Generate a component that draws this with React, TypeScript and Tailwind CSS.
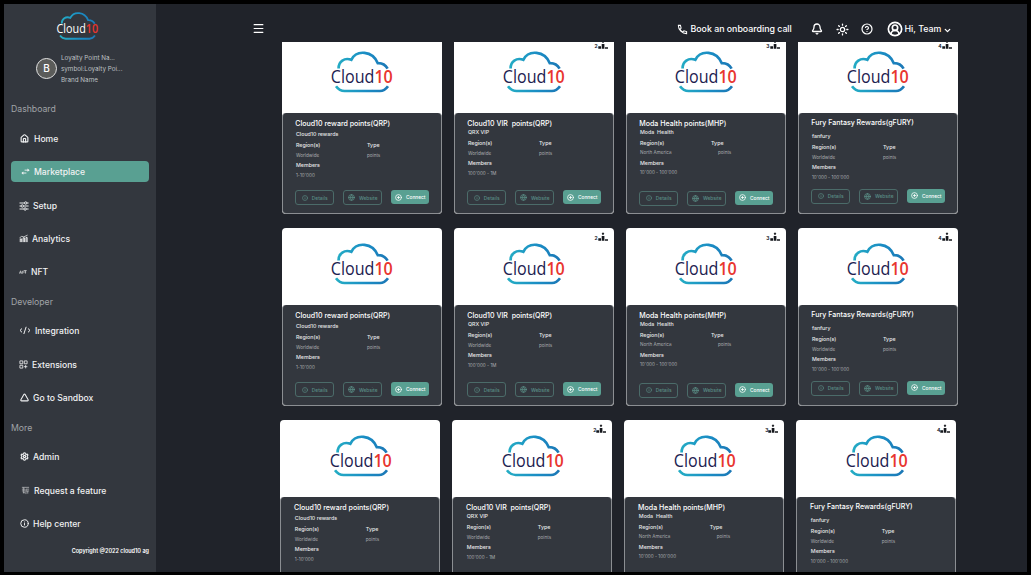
import React from "react";
import { Menu, Info, Globe, CirclePlus, Bell, Sun, CircleHelp, CircleUserRound, ChevronDown, House, Triangle, Settings } from "lucide-react";

function Logo({ dark, cls }: { dark?: boolean; cls: string }) {
  const id = dark ? "cloud-dark" : "cloud-light";
  return (
    <svg viewBox="0 0 64 42" className={`overflow-visible ${cls}`}>
      <defs>
        <linearGradient id={id} gradientUnits="userSpaceOnUse" x1="5" x2="58" y1="0" y2="0">
          <stop offset="0" stopColor="#25aec4" />
          <stop offset="0.6" stopColor="#1a8cc4" />
          <stop offset="1" stopColor="#1c78b6" />
        </linearGradient>
      </defs>
      <g fill="none" stroke={`url(#${id})`} strokeWidth="2.7">
        <path d="M8.6 17.5C8.4 10.5 14.5 6.2 21.3 8.8C26.5-1.5 42.5-.5 47.8 12.2C52 12 55.5 14 57.6 17.6" />
        <path d="M6 35.2Q9.5 40 14.5 40H50Q54.5 40 58 35.2" />
      </g>
      <text x="0.8" y="32" textLength="62" lengthAdjust="spacingAndGlyphs" fontFamily="Open Sans, sans-serif" fontSize="18" fill={dark ? "#ffffff" : "#1c2150"}>
        Cloud<tspan fontWeight="600" fill="#e8352e">10</tspan>
      </text>
    </svg>
  );
}

const ic = "h-[9px] w-[9px] shrink-0";

function Swap() {
  return (
    <svg viewBox="0 0 10 10" className={ic} fill="none" stroke="currentColor" strokeWidth="1">
      <path d="M4 3.5H8M1.6 6.7H6" />
      <path d="M7.2 1.7L9.6 3.5L7.2 5.2ZM2.6 5L.4 6.7L2.6 8.5Z" fill="currentColor" stroke="none" />
    </svg>
  );
}
function Sliders() {
  return (
    <svg viewBox="0 0 10 10" className="h-[10px] w-[10px] shrink-0" fill="none" stroke="currentColor" strokeWidth=".95">
      <path d="M.5 2H5.4M8 2H9.6M.5 5H2M4.6 5H9.6M.5 8H4.8M7.4 8H9.6" />
      <circle cx="6.7" cy="2" r="1.2" />
      <circle cx="3.3" cy="5" r="1.2" />
      <circle cx="6.1" cy="8" r="1.2" />
    </svg>
  );
}
function Chart() {
  return (
    <svg viewBox="0 0 10 10" className={ic} fill="none" stroke="currentColor" strokeWidth="1.1">
      <path d="M1.4 9V5.5H3V9M4.6 9V4.2H6V9M7.8 9V3.8H9V9" />
      <path d="M.5 4.4L3 2.6L5.3 3.2L9.6 1.2" strokeWidth=".8" />
    </svg>
  );
}
function Nft() {
  return (
    <svg viewBox="0 0 10 10" className="h-[8px] w-[8px] shrink-0" fill="none" stroke="currentColor" strokeWidth="1" opacity=".8">
      <path d="M.5 7L2 3.5L3.2 7M1 6H3M4.6 7.2V3.5M4.6 5H6.5M5.8 3.2H9.6M8 3.2V7M6.8 5H9" />
    </svg>
  );
}
function Code() {
  return (
    <svg viewBox="0 0 12 9" className="h-[9px] w-[12px] shrink-0" fill="none" stroke="currentColor" strokeWidth="1">
      <path d="M3 2.5L1 4.4L3 6.3M9 2.5L11 4.4L9 6.3M7.2 .8L4.8 8" />
    </svg>
  );
}
function Blocks() {
  return (
    <svg viewBox="0 0 10 10" className={ic} fill="none" stroke="currentColor" strokeWidth=".9">
      <path d="M1 1H4.2V4.2H1ZM1 5.9H4.2V9H1ZM5.9 1H9V4.2H5.9ZM7.4 5.6V9.3M5.6 7.4H9.3" />
    </svg>
  );
}
function Feature() {
  return (
    <svg viewBox="0 0 10 10" className={ic} fill="none" stroke="currentColor" strokeWidth=".8" opacity=".75">
      <path d="M1 1.5H9M1 3.5H4.5M1 5.5H4.5M2 7.5H4.5M5.5 9V3.5H9M5.5 5.5H9M7.5 5.5V8.5M3 1.5V8" />
    </svg>
  );
}

function Item({ icon, label, cls }: { icon: React.ReactNode; label: string; cls: string }) {
  return (
    <div className={`flex h-[21px] shrink-0 items-center rounded-[4px] text-[8.6px] font-medium text-[#f1f2f3] ${cls}`}>
      {icon}
      <span className="whitespace-nowrap pt-px">{label}</span>
    </div>
  );
}
function Heading({ label, cls }: { label: string; cls: string }) {
  return <div className={`flex h-[15px] shrink-0 items-center pt-[2px] text-[8.7px] text-[#a0a3a7] ${cls}`}>{label}</div>;
}

function Sidebar() {
  return (
    <aside className="flex h-[568px] w-[152px] shrink-0 flex-col bg-[#33373e] pl-[7px]">
      <Logo dark cls="ml-[44.5px] mt-[7px] h-[30px] w-[43px] shrink-0" />
      <div className="mt-[10px] flex h-[34px] shrink-0 items-center pl-[25px]">
        <div className="flex h-[21px] w-[21px] shrink-0 items-center justify-center rounded-full border border-[#e4e4e4] bg-[#5b5c5a] text-[10px] font-medium text-white">B</div>
        <div className="ml-[4px] whitespace-nowrap pt-[2px] text-[6.3px] leading-[11px] text-[#bfc1c4]">
          <div>Loyalty Point Na...</div>
          <div>symbol:Loyalty Poi...</div>
          <div>Brand Name</div>
        </div>
      </div>
      <Heading label="Dashboard" cls="mt-[16px]" />
      <Item icon={<House className={ic} strokeWidth={3} />} label="Home" cls="mt-[12px] gap-[5px] pl-[9px]" />
      <Item icon={<Swap />} label="Marketplace" cls="mr-[7px] mt-[12px] gap-[4px] bg-[#59a092] pl-[10px]" />
      <Item icon={<Sliders />} label="Setup" cls="mt-[13px] gap-[4px] pl-[8px]" />
      <Item icon={<Chart />} label="Analytics" cls="mt-[12px] gap-[4px] pl-[8px]" />
      <Item icon={<Nft />} label="NFT" cls="mt-[12px] gap-[4px] pl-[8px]" />
      <Heading label="Developer" cls="mt-[12px]" />
      <Item icon={<Code />} label="Integration" cls="mt-[11px] gap-[4px] pl-[8px]" />
      <Item icon={<Blocks />} label="Extensions" cls="mt-[13px] gap-[4px] pl-[8px]" />
      <Item icon={<Triangle className={ic} strokeWidth={2.8} />} label="Go to Sandbox" cls="mt-[12px] gap-[4px] pl-[9px]" />
      <Heading label="More" cls="mt-[12px]" />
      <Item icon={<Settings className={ic} strokeWidth={3} />} label="Admin" cls="mt-[11px] gap-[4px] pl-[9px]" />
      <Item icon={<Feature />} label="Request a feature" cls="mt-[13px] gap-[4px] pl-[10px]" />
      <Item icon={<Info className={ic} strokeWidth={2.6} />} label="Help center" cls="mt-[12px] gap-[4px] pl-[9px]" />
      <div className="mt-[12px] pr-[7px] text-right text-[5.5px] font-semibold leading-[10px] text-white">Copyright @2022 cloud10 ag</div>
    </aside>
  );
}

function Header() {
  return (
    <header className="flex h-[38px] shrink-0 items-center pl-[96px] pt-[12px] text-[8.8px] font-medium text-white">
      <Menu className="-mt-px h-[13px] w-[13px]" strokeWidth={2.3} />
      <svg viewBox="0 0 24 24" className="ml-[412px] h-[11px] w-[11px]" fill="none" stroke="currentColor" strokeWidth="2.2">
        <path d="M3 3H7.5L9 9L6.5 11.5C8 14.5 9.5 16 12.5 17.5L15 15L21 16.5V21C11 21 3 13 3 3Z" />
      </svg>
      <span className="ml-[2.5px] w-[104px] whitespace-nowrap">Book an onboarding call</span>
      <Bell className="ml-[16px] h-[12px] w-[12px]" strokeWidth={2.6} />
      <Sun className="ml-[13px] h-[13px] w-[13px]" strokeWidth={2.4} />
      <CircleHelp className="ml-[12px] h-[12px] w-[12px]" strokeWidth={2.4} />
      <CircleUserRound className="ml-[14px] h-[16px] w-[16px]" strokeWidth={2.5} />
      <span className="ml-[2px] w-[38px] whitespace-nowrap">Hi, Team</span>
      <ChevronDown className="mt-[2px] h-[9px] w-[9px]" strokeWidth={3.4} />
    </header>
  );
}

type CardData = {
  title: string; sub: string; region: string; range: string; rank?: string;
  gap: string; typeCls: string; btn: string; lift: string;
};

const cards: CardData[] = [
  { title: "Cloud10 reward points(QRP)", sub: "Cloud10 rewards", region: "Worldwide", range: "1-10'000", gap: "mt-0", typeCls: "", btn: "mb-[8.4px]", lift: "mt-px" },
  { title: "Cloud10 VIR  points(QRP)", sub: "QRX VIP", region: "Worldwide", range: "100'000 - 1M", rank: "2", gap: "-mt-[1.8px]", typeCls: "", btn: "mb-[8.4px]", lift: "mt-px" },
  { title: "Moda Health points(MHP)", sub: "Moda  Health", region: "North America", range: "10'000 - 100'000", rank: "3", gap: "-mt-[2.5px]", typeCls: "pl-[7px]", btn: "mb-[7.6px]", lift: "mt-px" },
  { title: "Fury Fantasy Rewards(gFURY)", sub: "fanfury", region: "Worldwide", range: "10'000 - 100'000", rank: "4", gap: "mt-[2.6px]", typeCls: "", btn: "mb-[9px]", lift: "mt-[0.4px]" },
];

function Rank({ n }: { n: string }) {
  return (
    <div className="absolute right-[6px] top-[4px] flex items-end text-[#15171c]">
      <span className="text-[5px] font-bold leading-[5px]">{n}</span>
      <svg viewBox="0 0 10 9" className="h-[9px] w-[10px]" fill="currentColor">
        <path d="M.3 6.3H3V8.7H.3ZM3.7 4H6.4V8.7H3.7ZM7 7.2H10V8.7H7Z" />
        <path d="M5 .2L6.3 1.7L5 3.2L3.7 1.7Z" />
      </svg>
    </div>
  );
}

function Card({ c }: { c: CardData }) {
  const outline = "flex h-[15px] w-[39px] items-center justify-center gap-[4px] rounded-[3px] border border-[#4b6b69] text-[#5a8e86]";
  return (
    <div className={`relative flex h-[178px] w-[160px] flex-col overflow-hidden rounded-[4px] bg-white ${c.lift}`}>
      <div className="flex h-[77px] shrink-0 justify-center pt-[15px]">
        <Logo cls="ml-[0.6px] h-[42px] w-[64px]" />
      </div>
      {c.rank && <Rank n={c.rank} />}
      <div className="flex grow flex-col rounded-[4px] border border-t-0 border-[#8b8e92] bg-[#33373e] pl-[13px] pt-[5.6px] text-[5.3px] font-medium leading-[10px] text-[#e8e9ea]">
        <div className="-ml-[0.3px] h-[10px] whitespace-pre text-[7.05px] text-white">{c.title}</div>
        <div className={`h-[11px] whitespace-pre pl-[0.4px] ${c.gap}`}>{c.sub}</div>
        <div className="flex h-[10px] pl-[0.4px]">
          <span className="w-[71px]">Region(s)</span>
          <span>Type</span>
        </div>
        <div className="flex h-[10px] pl-[0.4px] pt-[0.7px] text-[4.6px] font-normal text-[#a9acaf]">
          <span className="w-[71px]">{c.region}</span>
          <span className={c.typeCls}>points</span>
        </div>
        <div className="h-[10px] pl-[0.4px]">Members</div>
        <div className="h-[10px] pl-[0.4px] pt-[0.7px] text-[4.6px] font-normal text-[#a9acaf]">{c.range}</div>
        <div className={`-ml-[0.4px] mt-auto flex gap-[9px] text-[4.8px] ${c.btn}`}>
          <div className={outline}><Info className="h-[6px] w-[6px]" strokeWidth={2.4} />Details</div>
          <div className={outline}><Globe className="h-[7px] w-[7px]" strokeWidth={2.6} />Website</div>
          <div className="flex h-[14px] w-[38px] items-center justify-center gap-[4px] rounded-[3px] bg-[#59a092] text-white"><CirclePlus className="h-[7px] w-[7px]" strokeWidth={2.6} />Connect</div>
        </div>
      </div>
    </div>
  );
}

export default function App() {
  return (
    <div className="h-[575px] w-[1031px] overflow-hidden bg-black pl-[4px] pt-[4px] font-['Inter',sans-serif]">
      <div className="flex h-[568px] w-[1023px] overflow-hidden bg-[#20232a]">
        <Sidebar />
        <div className="flex grow flex-col">
          <Header />
          <main className="h-[530px] overflow-hidden pl-[125.6px]">
            <div className="-mt-[6.6px] flex flex-col gap-[13px]">
              {["ml-0", "ml-0", "-ml-[1.2px]"].map((m, i) => (
                <div key={i} className={`flex h-[179px] shrink-0 gap-[12px] ${m}`}>
                  {cards.map((c) => <Card key={c.title} c={c} />)}
                </div>
              ))}
            </div>
          </main>
        </div>
      </div>
    </div>
  );
}
